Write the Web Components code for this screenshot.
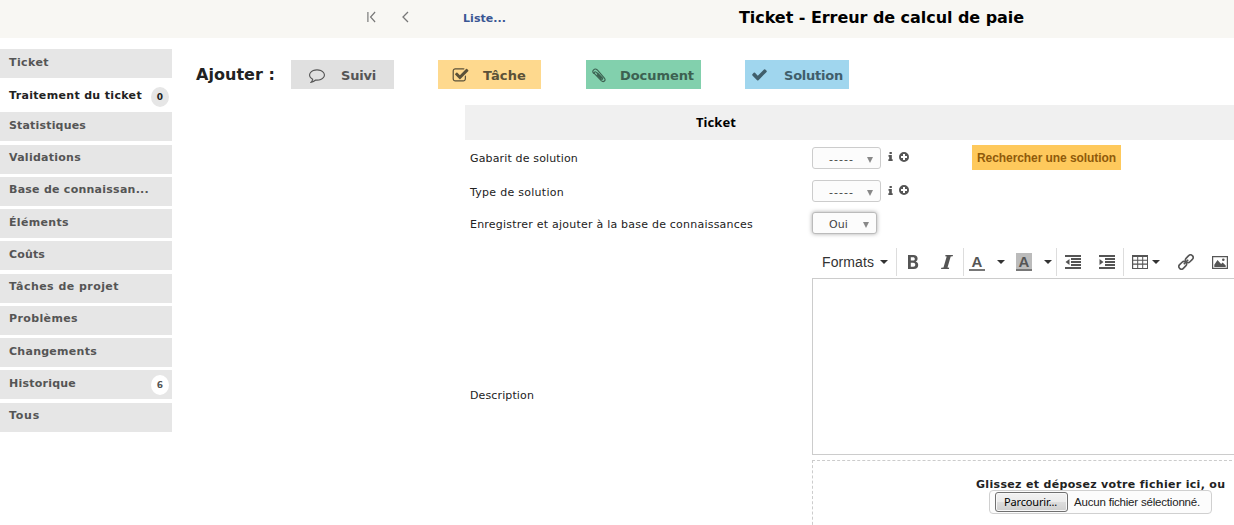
<!DOCTYPE html>
<html lang="fr"><head><meta charset="utf-8"><title>Ticket - Erreur de calcul de paie</title>
<style>html,body{margin:0;height:525px;overflow:hidden;background:#fff}body{font-family:"DejaVu Sans",sans-serif;font-size:11px;color:#222}</style>
</head><body><ticket-page></ticket-page>
<script>
const define=(name,html,init)=>customElements.define(name,class extends HTMLElement{
  connectedCallback(){ if(this.shadowRoot)return;
    this.attachShadow({mode:'open'}).innerHTML='<style>*{box-sizing:border-box}</style>'+(typeof html==='function'?html(this):html);
    if(init)init(this);
  }});
const ICONS={
 first:['0 0 10 12','<path d="M1 1v10M9 1L4 6l5 5" fill="none" stroke="currentColor" stroke-width="1.3"/>'],
 prev:['0 0 7 12','<path d="M6 1L1 6l5 5" fill="none" stroke="currentColor" stroke-width="1.3"/>'],
 check:['0 0 1792 1792','<path d="M1671 566q0 40-28 68l-724 724-136 136q-28 28-68 28t-68-28l-136-136-362-362q-28-28-28-68t28-68l136-136q28-28 68-28t68 28l294 295 656-657q28-28 68-28t68 28l136 136q28 28 28 68z"/>'],
 comment:['0 0 1792 1792','<path d="M896 384q-204 0-381.5 69.5t-282 187.5-104.5 255q0 112 71.5 213.5t201.5 175.5l87 50-27 96q-24 91-70 172 152-63 275-171l43-38 57 6q69 8 130 8 204 0 381.5-69.5t282-187.5 104.5-255-104.5-255-282-187.5-381.5-69.5zm896 512q0 174-120 321.5t-326 233-450 85.5q-70 0-145-8-198 175-460 242-49 14-114 22h-5q-15 0-27-10.5t-16-27.5v-1q-3-4-.5-12t2-10 4.5-9.5l6-9 7-8.5 8-9q7-8 31-34.5t34.5-38 31-39.5 32.5-51 27-59 26-76q-157-89-247.5-220t-90.5-281q0-174 120-321.5t326-233 450-85.5 450 85.5 326 233 120 321.5z"/>'],
 task:['0 0 1792 1792','<path d="M1472 930v318q0 119-84.5 203.5t-203.5 84.5h-832q-119 0-203.5-84.5t-84.5-203.5v-832q0-119 84.5-203.5t203.5-84.5h832q63 0 117 25 15 7 18 23 3 17-9 29l-49 49q-10 10-23 10-3 0-9-2-23-6-45-6h-832q-66 0-113 47t-47 113v832q0 66 47 113t113 47h832q66 0 113-47t47-113v-254q0-13 9-22l64-64q10-10 23-10 6 0 12 3 20 8 20 29zm231-489l-814 814q-24 24-57 24t-57-24l-430-430q-24-24-24-57t24-57l110-110q24-24 57-24t57 24l263 263 647-647q24-24 57-24t57 24l110 110q24 24 24 57t-24 57z"/>'],
 clip:['0 0 14 15','<path d="M9.600 9.700L4.300 4.300C2.900 3 1.500 4.500 2.700 5.800l6.500 6.900c2.400 2.300 5.200-.5 3-2.900L5.300 2C2.700-.5-.7 2.800 1.700 5.500M5.300 6.900l4 4.100c1 .9 1.900-.2 1-1.200L5.500 5" fill="none" stroke="currentColor" stroke-width="1.1" stroke-linecap="round"/>'],
 info:['0 0 6 10','<path d="M1.800 0h2.800v2.200H1.800zM.6 3.400h4v4.700h1V10H.4V8.100h1V5.200H.6z"/>'],
 plus:['0 0 10 10','<path fill-rule="evenodd" d="M5 0a5 5 0 100 10A5 5 0 005 0zM4 2h2v2h2v2H6v2H4V6H2V4h2z"/>'],
 bold:['0 0 12 14','<path fill-rule="evenodd" d="M1 0h5.400c2.800 0 4.200 1.300 4.200 3.500 0 1.500-.7 2.500-2 3 1.600.4 2.600 1.600 2.600 3.400C11.200 12.500 9.600 14 6.800 14H1zM3.800 2.200v3.400h2c1.400 0 2-.6 2-1.700s-.6-1.700-2-1.700zM3.800 7.700v4.100h2.400c1.400 0 2.100-.7 2.100-2s-.7-2.100-2.200-2.100z"/>'],
 italic:['0 0 12 14','<path d="M4.500 0H12l-.3 1.200-2 .3L6.500 12.400l1.700.4L7.900 14H0l.3-1.200 2.200-.3L5.700 1.600 4.200 1.200z"/>'],
 out:['0 0 16 14','<path d="M0 0h16v2H0zM6 3h10v2H6zM6 6h10v2H6zM6 9h10v2H6zM0 12h16v2H0zM4.500 4v6L.5 7z"/>'],
 in:['0 0 16 14','<path d="M0 0h16v2H0zM6 3h10v2H6zM6 6h10v2H6zM6 9h10v2H6zM0 12h16v2H0zM.5 4v6l4-3z"/>'],
 table:['0 0 16 14','<path fill-rule="evenodd" d="M0 0h16v14H0zM1.200 2v2.700h4V2zM6.200 2v2.700h4V2zM11.200 2v2.700H15V2zM1.200 5.800v2.800h4V5.800zM6.200 5.800v2.800h4V5.800zM11.200 5.800v2.800H15V5.800zM1.200 9.700v3.200h4V9.700zM6.200 9.700v3.200h4V9.700zM11.200 9.700v3.200H15V9.700z"/>'],
 link:['0 0 16 16','<g fill="none" stroke="currentColor" stroke-width="1.600"><rect x="-4.300" y="-2.600" width="8.600" height="5.200" rx="2.600" transform="translate(11.300 4.700) rotate(-45)"/><rect x="-4.300" y="-2.600" width="8.600" height="5.200" rx="2.600" transform="translate(4.700 11.300) rotate(-45)"/><path d="M5.800 10.200l4.400-4.400"/></g>'],
 image:['0 0 16 13','<path d="M.6.6h14.800v11.800H.6z" fill="none" stroke="currentColor" stroke-width="1.200"/><path d="M2.300 10.900V8.800L5.500 4l3.600 4 1.500-1.500 3.100 3v1.400z"/><circle cx="11.300" cy="3.800" r="1.300"/>']
};
define('ui-icon',e=>{const i=ICONS[e.getAttribute('name')];return `<style>:host{display:block;flex:none}svg{display:block;width:100%;height:100%;fill:currentColor}</style><svg viewBox="${i[0]}" preserveAspectRatio="none">${i[1]}</svg>`});
/* Single line of text whose tracking is adjusted to fill the width given in "w". */
define('fit-text','<style>:host{display:block;white-space:nowrap;flex:none}span{display:inline-block}</style><span><slot></slot></span>',e=>{
  const s=e.shadowRoot.querySelector('span'),w=+e.getAttribute('w');
  const n=e.textContent.length,c=s.getBoundingClientRect().width;
  if(w&&c&&n)s.style.letterSpacing=((w-c)/n)+'px';
});
define('nav-item',e=>`<style>:host{display:flex;align-items:center;height:29px;margin-bottom:3.25px;background:#e6e6e6;color:#555;font-weight:bold;padding:0 3px 3px 9px;justify-content:space-between;box-sizing:border-box}
:host([active]){background:#fff;color:#222;height:32px;margin:-1px 0 0;padding-bottom:2px}
b{width:18px;height:20px;border-radius:50%;background:#fff;font-size:9px;line-height:20px;text-align:center;position:relative;top:2px}
:host([active]) b{background:#e6e6e6;top:2px}</style><fit-text w="${e.getAttribute('w')}">${e.getAttribute('label')}</fit-text>${e.hasAttribute('count')?`<b>${e.getAttribute('count')}</b>`:''}`);
define('add-button',e=>`<style>:host{display:flex;align-items:center;height:29px;font-size:13px;font-weight:bold;flex:none;box-sizing:border-box}fit-text{margin-left:auto;position:relative;top:1px}</style><slot></slot><fit-text w="${e.getAttribute('w')}">${e.getAttribute('label')}</fit-text>`);
define('select-box',e=>`<style>:host{display:flex;box-sizing:border-box;width:69px;height:22px;border:1px solid #ccc;border-radius:3px;background:#fcfcfc;align-items:center;padding:3px 7px 0 16px;justify-content:space-between;color:#444;flex:none}
:host([open]){width:65px;border-color:#bbb;box-shadow:0 0 4px #aaa}i{width:0;border:3.500px solid transparent;border-top:6px solid #888;border-bottom:0;margin-top:1px}</style><fit-text w="${e.getAttribute('w')}">${e.getAttribute('value')}</fit-text><i></i>`);
define('form-row','<style>:host{display:grid;grid-template-columns:342px 1fr}.l{align-self:center;padding-top:var(--drop,1px)}.v{display:flex;align-items:center}</style><div class="l"><slot name="label"></slot></div><div class="v"><slot></slot></div>');
define('editor-toolbar',`<style>:host{display:flex;height:31px;color:#555;align-items:center;font:14px "Liberation Sans",sans-serif;width:422px;padding-bottom:1px;box-sizing:border-box}
fit-text{color:#333}.c{flex:none;border:4px solid transparent;border-top-color:#333;border-bottom:0;width:0}hr{width:1px;height:28px;border:0;margin:0;background:#ddd;flex:none}
.a{width:16px;height:18px;border-bottom:2px solid #777;font:bold 15px/17px "Liberation Sans",sans-serif;text-align:center;flex:none}.g{background:#bbb}</style>
<fit-text w="52" style="margin-left:10px">Formats</fit-text><i class="c" style="margin-left:6px"></i><hr style="margin-left:8px">
<ui-icon name="bold" style="width:12px;height:14px;margin-left:10px"></ui-icon><ui-icon name="italic" style="width:12px;height:14px;margin-left:22px"></ui-icon><hr style="margin-left:10px">
<span class="a" style="margin-left:5px">A</span><i class="c" style="margin-left:12px"></i><span class="a g" style="margin-left:11px">A</span><i class="c" style="margin-left:12px"></i><hr style="margin-left:4px">
<ui-icon name="out" style="width:16px;height:14px;margin-left:8px"></ui-icon><ui-icon name="in" style="width:16px;height:14px;margin-left:18px"></ui-icon><hr style="margin-left:8px">
<ui-icon name="table" style="width:16px;height:14px;margin-left:8px"></ui-icon><i class="c" style="margin-left:4px"></i><ui-icon name="link" style="width:16px;height:16px;margin-left:18px"></ui-icon><ui-icon name="image" style="width:16px;height:13px;margin-left:18px"></ui-icon>`);
define('file-drop',`<style>:host{display:block;box-sizing:border-box;width:420px;height:70px;border:1px dashed #ccc;border-right:0;border-bottom:0;margin-top:5px;padding:17px 0 0 163px}
.h{font-weight:bold;line-height:13px;height:12px}.f{margin-left:13px;width:223px;height:24px;border:1px solid #d0d0d0;border-radius:4px;background:#fcfcfc;display:flex;align-items:center;padding-left:5px}
.b{width:73px;height:20px;border:1px solid #707070;border-radius:3px;background:linear-gradient(#f2f2f2 0,#ebebeb 50%,#ddd 51%,#cfcfcf);padding-left:8px;font:11px/18px "Noto Sans",sans-serif;color:#000;box-shadow:inset 0 0 0 1px #f8f8f8}
.n{font:11.500px "Liberation Sans",sans-serif;margin-left:6px;color:#222}</style><fit-text class="h" w="249">Glissez et déposez votre fichier ici, ou</fit-text>
<div class="f"><div class="b"><fit-text w="53">Parcourir...</fit-text></div><fit-text class="n" w="126">Aucun fichier sélectionné.</fit-text></div>`);
define('ticket-header',`<style>:host{display:flex;height:38px;background:#f8f7f3;align-items:center;color:#777;padding:0 0 4px 367px;box-sizing:border-box;font-weight:bold}h1{margin:2px 0 0 233px;font:bold 16px/22px "DejaVu Sans",sans-serif;color:#000}</style>
<ui-icon name="first" style="width:9px;height:12px"></ui-icon><ui-icon name="prev" style="width:7px;height:12px;margin-left:26px"></ui-icon><fit-text w="43" style="margin-left:54px;color:#3a5693;margin-top:2px">Liste...</fit-text><h1><fit-text w="285">Ticket - Erreur de calcul de paie</fit-text></h1>`);
define('solution-form',`<style>:host{display:block;margin:16px 0 0 293px}.head{background:#f0f0f0;height:35px;font:bold 13px/35px "Noto Sans",sans-serif;padding-left:231px;color:#000}form-row{margin-left:5px}
.search{background:#fec95c;color:#8f5a0a;font:bold 12px/26px "Liberation Sans",sans-serif;height:25px;width:149px;padding-left:5px;margin-left:63px;flex:none}
.i{width:5px;height:9px;margin:-2px 0 0 7px;color:#555}.p{width:10px;height:10px;margin:-2px 0 0 6px;color:#555}.ed{width:440px;height:177px;border:1px solid #ccc}</style>
<div class="head"><fit-text w="40">Ticket</fit-text></div>
<form-row style="height:35px"><fit-text slot="label" w="108">Gabarit de solution</fit-text><select-box w="25" value="-----"></select-box><ui-icon class="i" name="info"></ui-icon><ui-icon class="p" name="plus"></ui-icon><div class="search"><fit-text w="139">Rechercher une solution</fit-text></div></form-row>
<form-row style="height:32px;--drop:3px"><fit-text slot="label" w="94">Type de solution</fit-text><select-box w="25" value="-----"></select-box><ui-icon class="i" name="info"></ui-icon><ui-icon class="p" name="plus"></ui-icon></form-row>
<form-row style="height:32px;--drop:3px"><fit-text slot="label" w="283">Enregistrer et ajouter à la base de connaissances</fit-text><select-box open w="19" value="Oui"></select-box></form-row>
<form-row style="margin-top:8px;--drop:13px"><fit-text slot="label" w="64">Description</fit-text><div><editor-toolbar></editor-toolbar><div class="ed"></div><file-drop></file-drop></div></form-row>`);
define('ticket-page',`<style>:host{display:block;width:1234px;height:525px;overflow:hidden}.body{display:flex}nav{width:172px;padding-top:11px;flex:none}main{flex:none;width:1062px}.add{display:flex;margin-top:22px;padding-left:24px;align-items:center}</style>
<ticket-header></ticket-header><div class="body"><nav>
<nav-item label="Ticket" w="40"></nav-item><nav-item active label="Traitement du ticket" w="133" count="0"></nav-item><nav-item label="Statistiques" w="77"></nav-item><nav-item label="Validations" w="72"></nav-item><nav-item label="Base de connaissan..." w="140"></nav-item><nav-item label="Éléments" w="60"></nav-item><nav-item label="Coûts" w="36"></nav-item><nav-item label="Tâches de projet" w="110"></nav-item><nav-item label="Problèmes" w="69"></nav-item><nav-item label="Changements" w="88"></nav-item><nav-item label="Historique" w="67" count="6"></nav-item><nav-item label="Tous" w="31"></nav-item>
</nav><main><div class="add"><fit-text w="79" style="font-size:16px;font-weight:bold">Ajouter :</fit-text>
<add-button label="Suivi" w="35" style="width:103px;background:#e0e0e0;color:#555;margin-left:16px;padding:0 18px"><ui-icon name="comment" style="width:16px;height:16px;margin-top:1px"></ui-icon></add-button>
<add-button label="Tâche" w="43" style="width:103px;background:#fed98e;color:#5b5138;margin-left:44px;padding:0 15px 0 14px"><ui-icon name="task" style="width:17px;height:17px;margin-top:2px"></ui-icon></add-button>
<add-button label="Document" w="74" style="width:115px;background:#82d0ad;color:#3c6151;margin-left:45px;padding:0 7px 0 6px"><ui-icon name="clip" style="width:14px;height:15px;margin-top:2px"></ui-icon></add-button>
<add-button label="Solution" w="59" style="width:104px;background:#a0d6ee;color:#405e6b;margin-left:44px;padding:0 6px 0 6px"><ui-icon name="check" style="width:17px;height:17px;margin-top:0"></ui-icon></add-button></div>
<solution-form></solution-form></main></div>`);
</script></body></html>
